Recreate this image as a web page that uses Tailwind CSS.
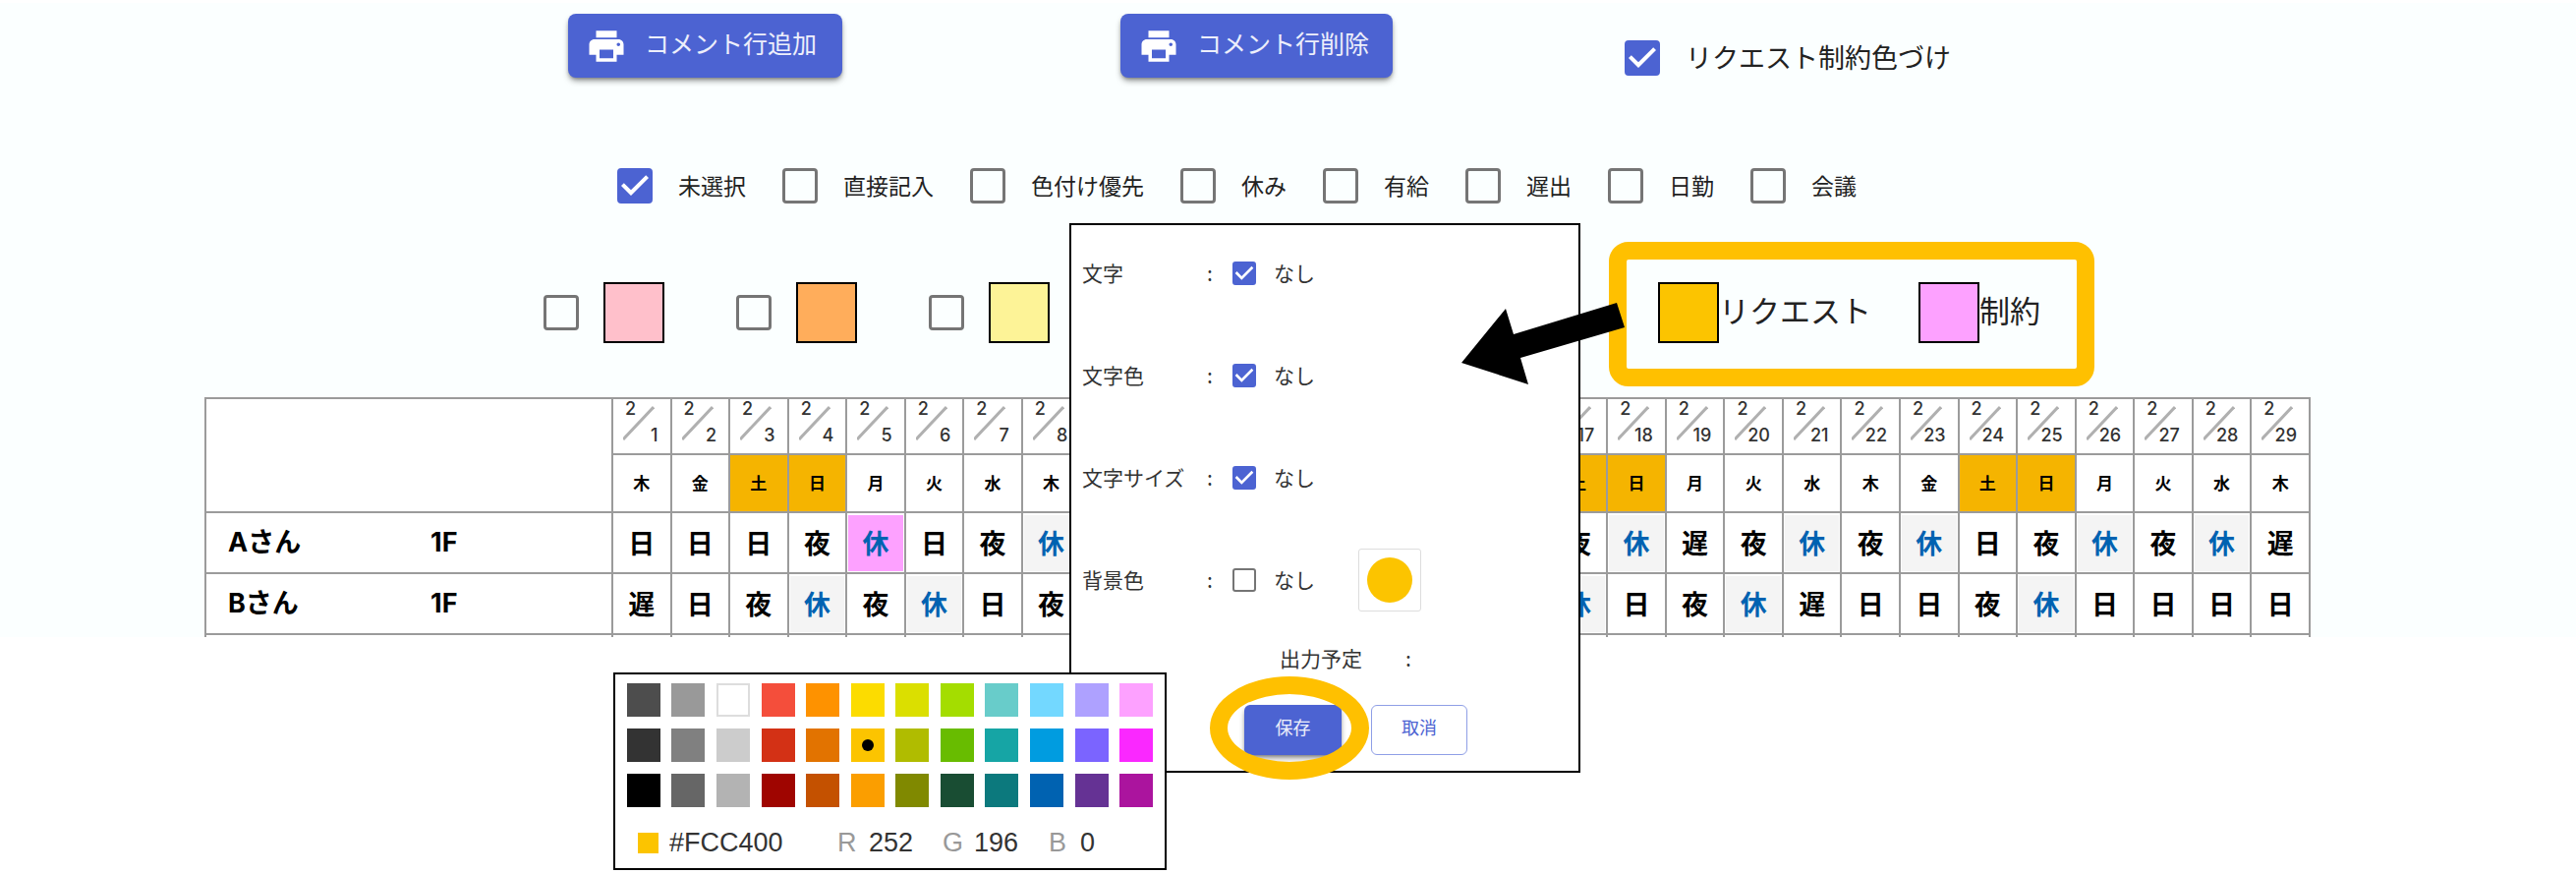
<!DOCTYPE html>
<html lang="ja">
<head>
  <meta charset="UTF-8">
  <meta name="viewport" content="width=device-width, initial-scale=1.0">
  <title>シフト表</title>
  <script src="https://cdn.jsdelivr.net/npm/@tailwindcss/browser@4"></script>
</head>
<body class="bg-white font-['Noto_Sans_CJK_JP',sans-serif] text-[#222]">

<div class="relative min-h-screen pt-[3px]">
  <main class="bg-[#fbffff] pt-[11px]">

    <!-- Toolbar -->
    <div class="flex items-start pl-[578px]">
      <button class="flex h-[65px] items-center gap-[18px] rounded-lg bg-[#4c63d2] pr-[26px] pl-[18px] text-[25px] text-white/90 shadow-md shadow-black/40">
        <svg class="size-[42px] fill-white" viewBox="0 0 24 24"><path d="M19 8H5c-1.66 0-3 1.34-3 3v6h4v4h12v-4h4v-6c0-1.66-1.34-3-3-3zm-3 11H8v-5h8v5zm3-7c-.55 0-1-.45-1-1s.45-1 1-1 1 .45 1 1-.45 1-1 1zm-1-9H6v4h12V3z"/></svg>
        <span class="pb-2 leading-8">コメント行追加</span>
      </button>
      <button class="ml-[283px] flex h-[65px] items-center gap-[18px] rounded-lg bg-[#4c63d2] pr-6 pl-[18px] text-[25px] text-white/90 shadow-md shadow-black/40">
        <svg class="size-[42px] fill-white" viewBox="0 0 24 24"><path d="M19 8H5c-1.66 0-3 1.34-3 3v6h4v4h12v-4h4v-6c0-1.66-1.34-3-3-3zm-3 11H8v-5h8v5zm3-7c-.55 0-1-.45-1-1s.45-1 1-1 1 .45 1 1-.45 1-1 1zm-1-9H6v4h12V3z"/></svg>
        <span class="pb-2 leading-8">コメント行削除</span>
      </button>
      <label class="ml-[236px] flex h-10 items-center gap-[26px] self-end text-[27px]">
        <span class="grid">
          <input type="checkbox" checked class="peer col-start-1 row-start-1 size-9 appearance-none rounded border-3 border-[#757575] checked:border-[#4c63d2] checked:bg-[#4c63d2]">
          <svg class="pointer-events-none invisible col-start-1 row-start-1 size-9 fill-white peer-checked:visible" viewBox="3 3 18 18"><path d="M10 17l-5-5 1.41-1.41L10 14.17l7.59-7.59L19 8z"/></svg>
        </span>
        <span class="pb-[2px] leading-8">リクエスト制約色づけ</span>
      </label>
    </div>

    <!-- Shift type filter -->
    <div id="shift-types" class="mt-[92px] flex h-9 items-center gap-[37px] pl-[628px] text-[23px]"></div>

    <!-- Colours and legend -->
    <div class="mt-[39px] flex items-center pl-[553px]">
      <div class="flex w-[1084px] items-center gap-[73px] pb-1">
        <label class="flex items-center gap-[25px]">
          <input type="checkbox" aria-label="ピンク" class="size-9 appearance-none rounded border-3 border-[#757575]">
          <span class="size-[62px] border-2 border-black bg-[#ffc0cb]"></span>
        </label>
        <label class="flex items-center gap-[25px]">
          <input type="checkbox" aria-label="オレンジ" class="size-9 appearance-none rounded border-3 border-[#757575]">
          <span class="size-[62px] border-2 border-black bg-[#ffad5b]"></span>
        </label>
        <label class="flex items-center gap-[25px]">
          <input type="checkbox" aria-label="黄色" class="size-9 appearance-none rounded border-3 border-[#757575]">
          <span class="size-[62px] border-2 border-black bg-[#fdf397]"></span>
        </label>
      </div>
      <div class="flex h-[147px] w-[494px] items-center rounded-[20px] border-18 border-[#ffc000] pb-1 pl-8 text-[31px]">
        <span class="size-[62px] border-2 border-black bg-[#fcc400]"></span>
        <span class="pb-1">リクエスト</span>
        <span class="ml-12 size-[62px] border-2 border-black bg-[#fda1ff]"></span>
        <span class="pb-1">制約</span>
      </div>
    </div>

    <!-- Schedule -->
    <div class="mt-[11px] mr-[270px] ml-52">
      <table class="w-full table-fixed border-collapse bg-white text-black">
        <colgroup><col class="w-[414px]"></colgroup>
        <thead>
          <tr id="date-row" class="h-[57px]">
            <th rowspan="2" class="border-2 border-[#9b9b9b]"></th>
          </tr>
          <tr id="weekday-row" class="h-[59px]"></tr>
        </thead>
        <tbody id="shift-rows"></tbody>
      </table>
    </div>
  </main>

  <!-- Cell format dialog -->
  <div role="dialog" aria-label="書式" class="absolute top-[227px] left-[1088px] h-[559px] w-[520px] border-2 border-black bg-white text-[21px] text-[#333]">
    <div id="format-rows" class="-mt-[3px] px-[11px]"></div>
    <div class="flex h-14 items-center pl-[212px]">
      <span class="w-32">出力予定</span><span>:</span>
    </div>
    <div class="flex gap-[30px] pt-[19px] pl-44 text-lg">
      <button class="h-[51px] w-[99px] rounded-md bg-[#4c63d2] pb-2 text-white/90 shadow-md shadow-black/40">保存</button>
      <button class="h-[51px] w-[98px] rounded-md border border-[#8f9fe6] pb-2 text-[#4c63d2]">取消</button>
    </div>
  </div>

  <!-- Highlight around the save button -->
  <div class="pointer-events-none absolute top-[688px] left-[1231px] h-[105px] w-[162px] rounded-[50%] border-18 border-[#ffc000]"></div>

  <!-- Arrow from legend to dialog -->
  <svg class="pointer-events-none absolute top-[308px] left-[1487px] h-[84px] w-[166px]" viewBox="0 0 166 84"><path d="M0 61 45 6 53 32 158 0 166 25 60 56 68 83z"/></svg>

  <!-- Colour picker -->
  <div class="absolute top-[684px] left-[624px] w-[563px] border-2 border-black bg-white px-[6px] pt-[9px] pb-3">
    <div id="palette" class="grid grid-cols-12 justify-items-center gap-y-3"></div>
    <div class="mt-[22px] flex h-[28px] items-center pl-[17px] font-['Liberation_Sans',sans-serif] text-[27px] text-[#333]">
      <span class="mr-[11px] size-[21px] bg-[#fcc400]"></span>
      <input type="text" aria-label="HEX" value="#FCC400" class="w-[171px]">
      <label for="red" class="w-8 text-[#999]">R</label>
      <input id="red" type="text" value="252" class="w-[75px]">
      <label for="green" class="w-8 text-[#999]">G</label>
      <input id="green" type="text" value="196" class="w-[76px]">
      <label for="blue" class="w-8 text-[#999]">B</label>
      <input id="blue" type="text" value="0" class="w-12">
    </div>
  </div>
</div>

<script>
// Filter checkboxes
const shiftTypes = ['未選択', '直接記入', '色付け優先', '休み', '有給', '遅出', '日勤', '会議'];
document.getElementById('shift-types').innerHTML = shiftTypes.map((name, i) => `
  <label class="flex items-center gap-[26px]">
    <span class="grid">
      <input type="checkbox" ${i === 0 ? 'checked' : ''} class="peer col-start-1 row-start-1 size-9 appearance-none rounded border-3 border-[#757575] checked:border-[#4c63d2] checked:bg-[#4c63d2]">
      <svg class="pointer-events-none invisible col-start-1 row-start-1 size-9 fill-white peer-checked:visible" viewBox="3 3 18 18"><path d="M10 17l-5-5 1.41-1.41L10 14.17l7.59-7.59L19 8z"/></svg>
    </span>
    <span class="pb-[2px] leading-8">${name}</span>
  </label>`).join('');

// Date and weekday header, February starts on a Thursday
const weekdays = ['木', '金', '土', '日', '月', '火', '水'];
for (let day = 1; day <= 29; day++) {
  document.getElementById('date-row').innerHTML += `
    <th class="border-2 border-[#9b9b9b] p-0 font-['Inter',sans-serif] text-lg font-medium text-[#333]">
      <div class="flex h-[55px] flex-col justify-between pr-3 pb-[6px] pl-[10px]">
        <div class="flex">
          <span class="w-2 pl-[2px] leading-5">2</span>
          <svg class="mt-[6px] -ml-2 h-9 w-8 shrink-0 stroke-[#b0b0b0] stroke-3" viewBox="0 0 32 36"><path d="M0 35 31 2"/></svg>
        </div>
        <span class="-mt-5 text-right leading-6">${day}</span>
      </div>
    </th>`;
  const weekday = weekdays[(day - 1) % 7];
  const weekdayBg = weekday === '土' || weekday === '日' ? 'bg-[#f5b400]' : 'bg-white';
  document.getElementById('weekday-row').innerHTML +=
    `<th class="border-2 border-[#9b9b9b] p-0 pb-[2px] text-[17px] leading-6 font-bold ${weekdayBg}">${weekday}</th>`;
}

// Shifts per person, a blank is a day with nothing entered
const people = [
  { name: 'Aさん', floor: '1F', shifts: '日日日夜休日夜休        夜休遅夜休夜休日夜休夜休遅', limited: 5 },
  { name: 'Bさん', floor: '1F', shifts: '遅日夜休夜休日夜        休日夜休遅日日夜休日日日日' },
];
const shiftRows = document.getElementById('shift-rows');
people.forEach(person => {
  const cells = [...person.shifts].map((shift, i) => {
    let style = '';
    if (shift === '休') style = 'bg-[#f4f4f4] text-[#0062b1]';
    if (person.limited === i + 1) style = 'bg-[#fda1ff] text-[#0062b1]';
    return `<td class="border-2 border-[#9b9b9b] p-px"><div class="flex h-[57px] items-center justify-center text-[27px] leading-8 font-bold ${style}">${shift}</div></td>`;
  });
  shiftRows.innerHTML += `
    <tr class="h-[62px]">
      <th class="border-2 border-[#9b9b9b] p-0 text-left font-['Inter','Noto_Sans_CJK_JP',sans-serif] text-[27px] leading-8 font-bold">
        <div class="flex pl-[22px]"><span class="w-[206px]">${person.name}</span><span>${person.floor}</span></div>
      </th>${cells.join('')}
    </tr>`;
});
// Top edge of the next row
shiftRows.innerHTML += `<tr class="h-[3px]">${'<td class="border-2 border-b-0 border-[#9b9b9b] p-0"></td>'.repeat(30)}</tr>`;

// Dialog rows
const formats = [
  { name: '文字', none: true },
  { name: '文字色', none: true },
  { name: '文字サイズ', none: true },
  { name: '背景色', none: false, color: '#fcc400' },
];
document.getElementById('format-rows').innerHTML = formats.map(format => `
  <div class="flex h-[104px] items-center">
    <span class="w-[127px]">${format.name}</span>
    <span class="w-[26px]">:</span>
    <label class="flex w-32 items-center gap-[18px]">
      <span class="grid">
        <input type="checkbox" ${format.none ? 'checked' : ''} class="peer col-start-1 row-start-1 size-6 appearance-none rounded-[3px] border-2 border-[#757575] checked:border-[#4c63d2] checked:bg-[#4c63d2]">
        <svg class="pointer-events-none invisible col-start-1 row-start-1 size-6 fill-white peer-checked:visible" viewBox="3 3 18 18"><path d="M10 17l-5-5 1.41-1.41L10 14.17l7.59-7.59L19 8z"/></svg>
      </span>
      なし
    </label>
    ${format.color ? `<button aria-label="色を選択" class="flex size-16 items-center justify-center rounded-[3px] border border-[#ddd]"><span class="size-[46px] rounded-full" style="background: ${format.color}"></span></button>` : ''}
  </div>`).join('');

// Palette
const colors = [
  '#4d4d4d', '#999999', '#ffffff', '#f44e3b', '#fe9200', '#fcdc00', '#dbdf00', '#a4dd00', '#68ccca', '#73d8ff', '#aea1ff', '#fda1ff',
  '#333333', '#808080', '#cccccc', '#d33115', '#e27300', '#fcc400', '#b0bc00', '#68bc00', '#16a5a5', '#009ce0', '#7b64ff', '#fa28ff',
  '#000000', '#666666', '#b3b3b3', '#9f0500', '#c45100', '#fb9e00', '#808900', '#194d33', '#0c797d', '#0062b1', '#653294', '#ab149e',
];
document.getElementById('palette').innerHTML = colors.map(color => `
  <button aria-label="${color}" class="flex size-[34px] items-center justify-center ${color === '#ffffff' ? 'border-2 border-[#ddd]' : ''}" style="background: ${color}">
    ${color === '#fcc400' ? '<span class="size-3 rounded-full bg-black"></span>' : ''}
  </button>`).join('');
</script>

</body>
</html>
